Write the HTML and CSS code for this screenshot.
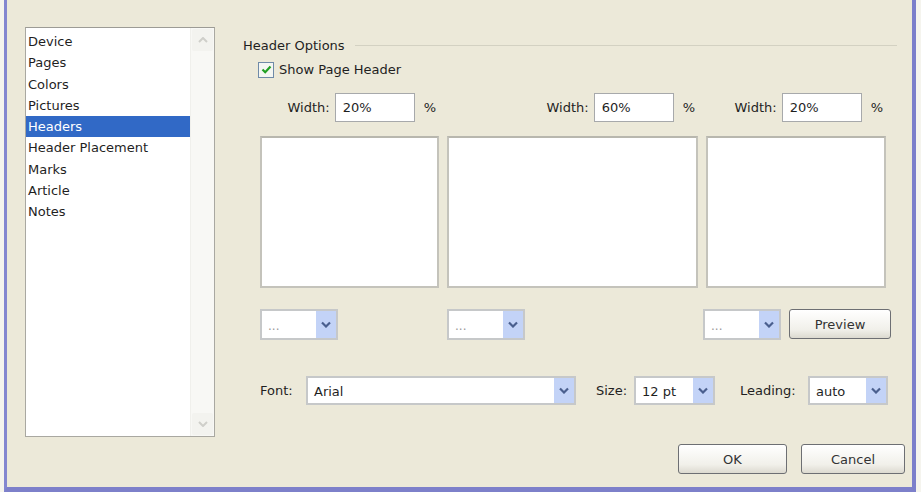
FILE: index.html
```html
<!DOCTYPE html>
<html lang="en">
<head>
    <meta charset="UTF-8">
    <meta name="viewport" content="width=device-width, initial-scale=1.0">
    <title>Header Options</title>
    <link rel="stylesheet" href="styles.css">
</head>
<body>
    <div class="dialog">
        <div class="sidebar">
            <div class="listbox">
                <ul class="items">
                    <li>Device</li>
                    <li>Pages</li>
                    <li>Colors</li>
                    <li>Pictures</li>
                    <li class="selected">Headers</li>
                    <li>Header Placement</li>
                    <li>Marks</li>
                    <li>Article</li>
                    <li>Notes</li>
                </ul>
                <div class="scrollbar">
                    <span class="scroll-btn">
                        <svg width="10" height="6" viewBox="0 0 10 6"><path d="M1 5 L5 1 L9 5" fill="none" stroke="#cfcfca" stroke-width="2"/></svg>
                    </span>
                    <span class="scroll-btn">
                        <svg width="10" height="6" viewBox="0 0 10 6"><path d="M1 1 L5 5 L9 1" fill="none" stroke="#cfcfca" stroke-width="2"/></svg>
                    </span>
                </div>
            </div>
        </div>

        <div class="panel">
            <div class="group-title">
                <span>Header Options</span>
                <span class="rule"></span>
            </div>

            <label class="check">
                <span class="checkbox">
                    <svg width="11" height="11" viewBox="0 0 11 11"><path d="M1.5 5.5 L4.2 8.2 L9.5 2.5" fill="none" stroke="#22a024" stroke-width="2.2"/></svg>
                </span>
                Show Page Header
            </label>

            <div class="columns">
                <div class="col">
                    <div class="width-row">
                        <span>Width:</span>
                        <span class="field">20%</span>
                        <span class="pct">%</span>
                    </div>
                    <div class="box"></div>
                </div>
                <div class="col">
                    <div class="width-row">
                        <span>Width:</span>
                        <span class="field">60%</span>
                        <span class="pct">%</span>
                    </div>
                    <div class="box"></div>
                </div>
                <div class="col">
                    <div class="width-row">
                        <span>Width:</span>
                        <span class="field">20%</span>
                        <span class="pct">%</span>
                    </div>
                    <div class="box"></div>
                </div>
            </div>

            <div class="selectors">
                <div class="combo small"><span class="value dots">...</span><span class="drop"><svg width="10" height="7" viewBox="0 0 10 7"><path d="M1 1.5 L5 5.5 L9 1.5" fill="none" stroke="#4a5f8e" stroke-width="2.2"/></svg></span></div>
                <div class="combo small"><span class="value dots">...</span><span class="drop"><svg width="10" height="7" viewBox="0 0 10 7"><path d="M1 1.5 L5 5.5 L9 1.5" fill="none" stroke="#4a5f8e" stroke-width="2.2"/></svg></span></div>
                <div class="last-cell">
                    <div class="combo small"><span class="value dots">...</span><span class="drop"><svg width="10" height="7" viewBox="0 0 10 7"><path d="M1 1.5 L5 5.5 L9 1.5" fill="none" stroke="#4a5f8e" stroke-width="2.2"/></svg></span></div>
                    <button class="btn preview">Preview</button>
                </div>
            </div>

            <div class="font-row">
                <span class="lbl lbl-font">Font:</span>
                <div class="combo font-combo"><span class="value">Arial</span><span class="drop"><svg width="10" height="7" viewBox="0 0 10 7"><path d="M1 1.5 L5 5.5 L9 1.5" fill="none" stroke="#4a5f8e" stroke-width="2.2"/></svg></span></div>
                <span class="lbl lbl-size">Size:</span>
                <div class="combo size-combo"><span class="value">12 pt</span><span class="drop"><svg width="10" height="7" viewBox="0 0 10 7"><path d="M1 1.5 L5 5.5 L9 1.5" fill="none" stroke="#4a5f8e" stroke-width="2.2"/></svg></span></div>
                <span class="lbl lbl-leading">Leading:</span>
                <div class="combo leading-combo"><span class="value">auto</span><span class="drop"><svg width="10" height="7" viewBox="0 0 10 7"><path d="M1 1.5 L5 5.5 L9 1.5" fill="none" stroke="#4a5f8e" stroke-width="2.2"/></svg></span></div>
            </div>

            <div class="actions">
                <button class="btn ok">OK</button>
                <button class="btn cancel">Cancel</button>
            </div>
        </div>
    </div>
</body>
</html>
```

FILE: styles.css
```css
body {
    margin: 0;
    background-color: #f5f4ee;
    font-family: "DejaVu Sans", Verdana, sans-serif;
    font-size: 13px;
    color: #1f1f1f;
}
.dialog {
    display: flex;
    margin-left: 4px;
    width: 905px;
    height: 487px;
    background-color: #ece9d9;
    border-left: 3px solid #8487d0;
    border-right: 4px solid #7c7fcb;
    border-bottom: 5px solid #7d80ca;
}
.sidebar {
    padding: 27px 0 0 18px;
}
.listbox {
    display: flex;
    width: 190px;
    height: 410px;
    box-sizing: border-box;
    border: 1px solid #a9a8a1;
    border-top-color: #9c9b95;
    background-color: #fff;
}
.items {
    flex: 1;
    list-style: none;
    margin: 0;
    padding: 3px 0 0 0;
}
.items li {
    height: 21.25px;
    line-height: 21.25px;
    padding-left: 2px;
    white-space: nowrap;
}
.items li.selected {
    background-color: #3169c6;
    color: #fff;
}
.scrollbar {
    display: flex;
    flex-direction: column;
    justify-content: space-between;
    width: 23px;
    background-color: #f8f8f5;
    border-left: 1px solid #f0f0ec;
}
.scroll-btn {
    display: flex;
    align-items: center;
    justify-content: center;
    height: 22px;
    margin: 1px;
    border-radius: 2px;
    background-color: #f3f3ef;
}
.panel {
    flex: 1;
    margin-left: 28px;
    padding: 37px 7px 0 0;
}
.group-title {
    display: flex;
    align-items: center;
    gap: 10px;
    height: 16px;
    margin-right: 8px;
}
.rule {
    flex: 1;
    border-top: 1px solid #d3d1c2;
}
.check {
    display: flex;
    align-items: center;
    gap: 5px;
    height: 17px;
    margin-top: 8px;
    padding-left: 15px;
}
.checkbox {
    display: flex;
    align-items: center;
    justify-content: center;
    width: 14px;
    height: 14px;
    border: 1px solid #6f8aa8;
    background-color: #f4f6f2;
}
.columns,
.selectors {
    display: grid;
    grid-template-columns: 179px 251px 180px;
    column-gap: 8px;
    margin-left: 17px;
}
.columns {
    margin-top: 15px;
}
.width-row {
    display: flex;
    justify-content: flex-end;
    align-items: center;
    height: 29px;
    padding-right: 3px;
}
.field {
    width: 80px;
    height: 29px;
    box-sizing: border-box;
    margin: 0 9px 0 5px;
    padding: 0 7px;
    line-height: 27px;
    border: 1px solid #a7a9ab;
    background-color: #fff;
}
.box {
    height: 152px;
    margin-top: 14px;
    box-sizing: border-box;
    border: 2px solid #c4c3bb;
    border-top-color: #b8b7ae;
    background-color: #fff;
}
.selectors {
    margin-top: 21px;
}
.last-cell {
    display: flex;
    gap: 8px;
    margin-left: -3px;
}
.combo {
    display: flex;
    flex-shrink: 0;
    height: 31px;
    box-sizing: border-box;
    border: 2px solid #c6c8c9;
    background-color: #fff;
}
.combo.small {
    width: 78px;
}
.value {
    flex: 1;
    padding-left: 6px;
    line-height: 27px;
    white-space: nowrap;
}
.value.dots {
    color: #9a9a9a;
    font-size: 12px;
    line-height: 31px;
}
.drop {
    display: flex;
    align-items: center;
    justify-content: center;
    width: 20px;
    background-color: #c3d3f7;
}
.btn {
    flex-shrink: 0;
    height: 30px;
    border: 1px solid #6d6f73;
    border-radius: 3px;
    background: linear-gradient(#ffffff, #f1f0ea 70%, #dcdad0);
    font-family: "DejaVu Sans", Verdana, sans-serif;
    font-size: 13px;
    color: #333;
    cursor: pointer;
}
.preview {
    width: 102px;
}
.font-row {
    display: flex;
    align-items: center;
    margin: 36px 0 0 17px;
}
.font-row .combo {
    height: 29px;
}
.lbl-font {
    width: 46px;
}
.lbl-size {
    width: 38px;
    margin-left: 20px;
}
.lbl-leading {
    width: 68px;
    margin-left: 25px;
}
.font-combo {
    width: 270px;
}
.size-combo {
    width: 81px;
}
.leading-combo {
    width: 80px;
}
.actions {
    display: flex;
    justify-content: flex-end;
    gap: 14px;
    margin-top: 39px;
}
.ok {
    width: 109px;
}
.cancel {
    width: 104px;
}
```
